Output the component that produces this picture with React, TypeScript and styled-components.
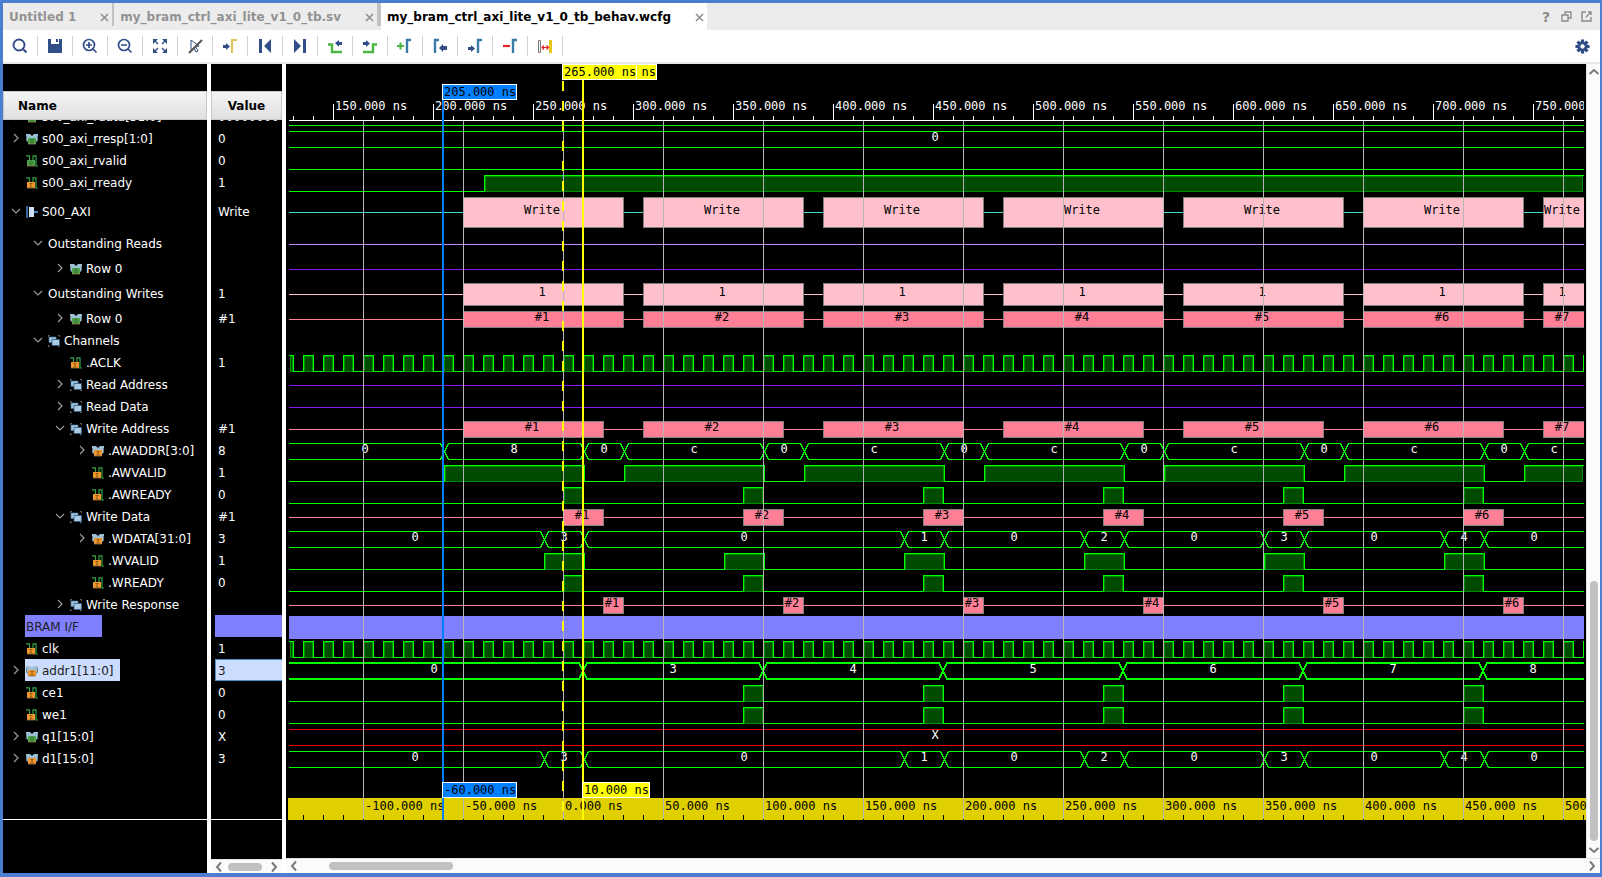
import React, { useEffect, useRef, useState } from "react";
import styled, { createGlobalStyle } from "styled-components";

const UI_FONT = '"DejaVu Sans", "Liberation Sans", sans-serif';
const MONO_FONT = '"DejaVu Sans Mono", "Liberation Mono", monospace';
const NAVY = "#314e88";
const GREEN = "#00ff00";
const VIOLET = "#8c14f0";
const ROSE = "#ff8096";
const PINK = "#ffc0cb";

const GlobalStyle = createGlobalStyle`
  * { box-sizing: border-box; }
  body { margin: 0; font-family: ${UI_FONT}; font-size: 12px; }
  button { border: 0; padding: 0; background: none; font: inherit; color: inherit; }
  svg { display: block; flex: none; }
`;

/* ---------- time axis: 2 px per nanosecond ---------- */

type Span = [number, number];

const EDGE = 3;
const at = (t: number) => 2 * t - 256;
const every90 = (from: number, len: number, count: number, delta = 0): Span[] =>
  Array.from({ length: count }, (_, i) => [
    at(from + 90 * i) + delta,
    at(from + 90 * i + len) + delta,
  ]);

type Wave =
  | { type: "none" }
  | { type: "bus"; cuts: number[]; values: string[]; color?: string; bold?: boolean }
  | { type: "logic"; highs: Span[] }
  | { type: "line"; y: number; color: string }
  | { type: "blocks"; y: number; line: string; fill: string; spans: Span[]; labels: string[]; bottom: number }
  | { type: "band" };

type IconKind = "busOut" | "busIn" | "out" | "in" | "iface" | "group";
interface Signal {
  name: string;
  level: number;
  value: string;
  height?: number;
  open?: boolean;
  icon?: IconKind;
  mark?: "band" | "selected";
  wave: Wave;
}

const tags = (n: number) => Array.from({ length: n }, (_, i) => `#${i + 1}`);
const clock: Wave = {
  type: "logic",
  highs: Array.from({ length: 110 }, (_, i) => [at(125 + 10 * i), at(130 + 10 * i)] as Span),
};
const ready: Wave = { type: "logic", highs: every90(265, 10, 6) };
const enable: Wave = { type: "logic", highs: every90(355, 10, 5) };
const data: Wave = {
  type: "bus",
  cuts: [255, 275, 435, 455, 525, 545, 615, 635, 705, 725].map((t) => at(t) + 1),
  values: ["0", "3", "0", "1", "0", "2", "0", "3", "0", "4", "0"],
};
const low: Wave = { type: "logic", highs: [] };
const idle: Wave = { type: "line", y: 12, color: VIOLET };
const bursts = (spans: Span[]): Wave => ({
  type: "blocks", y: 12, bottom: 21, line: ROSE, fill: ROSE, spans, labels: tags(spans.length),
});

const signals: Signal[] = [
  { name: "s00_axi_rdata[31:0]", level: 0, open: false, icon: "busOut", value: "00000000", wave: { type: "bus", cuts: [], values: [""] } },
  { name: "s00_axi_rresp[1:0]", level: 0, open: false, icon: "busOut", value: "0", wave: { type: "bus", cuts: [], values: ["0"] } },
  { name: "s00_axi_rvalid", level: 0, icon: "out", value: "0", wave: low },
  { name: "s00_axi_rready", level: 0, icon: "in", value: "1", wave: { type: "logic", highs: [[at(225) + 1, 9999]] } },
  {
    name: "S00_AXI", level: 0, open: true, icon: "iface", value: "Write", height: 36,
    wave: { type: "blocks", y: 19, bottom: 35, line: "#40e0d0", fill: PINK, spans: every90(215, 80, 7), labels: Array(7).fill("Write") },
  },
  { name: "Outstanding Reads", level: 1, open: true, value: "", height: 28, wave: { type: "line", y: 15, color: "#cc8cff" } },
  { name: "Row 0", level: 2, open: false, icon: "busOut", value: "", wave: idle },
  {
    name: "Outstanding Writes", level: 1, open: true, value: "1", height: 28,
    wave: { type: "blocks", y: 15, bottom: 27, line: PINK, fill: PINK, spans: every90(215, 80, 7), labels: Array(7).fill("1") },
  },
  { name: "Row 0", level: 2, open: false, icon: "busOut", value: "#1", wave: bursts(every90(215, 80, 7)) },
  { name: "Channels", level: 1, open: true, icon: "group", value: "", wave: { type: "none" } },
  { name: ".ACLK", level: 2, icon: "in", value: "1", wave: clock },
  { name: "Read Address", level: 2, open: false, icon: "group", value: "", wave: idle },
  { name: "Read Data", level: 2, open: false, icon: "group", value: "", wave: idle },
  { name: "Write Address", level: 2, open: true, icon: "group", value: "#1", wave: bursts(every90(215, 70, 7)) },
  {
    name: ".AWADDR[3:0]", level: 3, open: false, icon: "busIn", value: "8",
    wave: {
      type: "bus",
      cuts: [205, 275, 295, 365, 385, 455, 475, 545, 565, 635, 655, 725, 745].map((t) => at(t) + 1),
      values: ["0", "8", "0", "c", "0", "c", "0", "c", "0", "c", "0", "c", "0", "c"],
    },
  },
  {
    name: ".AWVALID", level: 3, icon: "in", value: "1",
    wave: { type: "logic", highs: [[at(205) + 1, at(275) + 1], ...every90(295, 70, 6, 1)] },
  },
  { name: ".AWREADY", level: 3, icon: "in", value: "0", wave: ready },
  { name: "Write Data", level: 2, open: true, icon: "group", value: "#1", wave: bursts(every90(265, 20, 6)) },
  { name: ".WDATA[31:0]", level: 3, open: false, icon: "busIn", value: "3", wave: data },
  { name: ".WVALID", level: 3, icon: "in", value: "1", wave: { type: "logic", highs: every90(255, 20, 6, 1) } },
  { name: ".WREADY", level: 3, icon: "in", value: "0", wave: ready },
  { name: "Write Response", level: 2, open: false, icon: "group", value: "", wave: bursts(every90(285, 10, 6)) },
  { name: "BRAM I/F", level: 0, mark: "band", value: "", wave: { type: "band" } },
  { name: "clk", level: 0, icon: "in", value: "1", wave: clock },
  {
    name: "addr1[11:0]", level: 0, open: false, icon: "busIn", mark: "selected", value: "3",
    wave: { type: "bus", bold: true, cuts: [275, 365, 455, 545, 635, 725].map(at), values: ["0", "3", "4", "5", "6", "7", "8"] },
  },
  { name: "ce1", level: 0, icon: "in", value: "0", wave: enable },
  { name: "we1", level: 0, icon: "in", value: "0", wave: enable },
  { name: "q1[15:0]", level: 0, open: false, icon: "busOut", value: "X", wave: { type: "bus", cuts: [], values: ["X"], color: "#f00000" } },
  { name: "d1[15:0]", level: 0, open: false, icon: "busIn", value: "3", wave: data },
];

/* ---------- frame ---------- */

const Frame = styled.main`
  display: flex;
  flex-direction: column;
  height: 100vh;
  min-height: 600px;
  border: 3px solid #4a7ecf;
  border-width: 3px 2px 4px 3px;
  background: #fff;
  overflow: hidden;
`;

const TabBar = styled.nav`
  display: flex;
  align-items: stretch;
  flex: none;
  height: 27px;
  background: #ececec;
`;

const Tab = styled.div<{ $active?: boolean }>`
  display: flex;
  align-items: center;
  padding-left: 6px;
  background: ${(p) => (p.$active ? "#fff" : "transparent")};
  & > button:first-child {
    font-weight: bold;
    color: ${(p) => (p.$active ? "#000" : "#929292")};
    white-space: nowrap;
    line-height: 26px;
  }
`;

const TabRule = styled.span<{ $w: number }>`
  width: ${(p) => p.$w}px;
  height: 23px;
  background: #c2c2c2;
`;

const CloseButton = styled.button`
  display: flex;
  align-items: center;
  margin: 2px 3px 0 24px;
  color: #8f8f8f;
`;

const TabTools = styled.div`
  display: flex;
  align-items: center;
  gap: 8px;
  margin-left: auto;
  padding-right: 8px;
  color: #8a8a8a;
  font-size: 14px;
  font-weight: bold;
  & > button { display: flex; justify-content: center; width: 12px; }
`;

const Toolbar = styled.div`
  display: flex;
  align-items: center;
  flex: none;
  height: 34px;
  border-bottom: 2px solid #e7e7e7;
`;

const ToolButton = styled.button`
  display: flex;
  align-items: center;
  justify-content: center;
  width: 35px;
  height: 20px;
  border-right: 1px solid #d2d2d2;
`;

const SettingsButton = styled.button`
  margin-left: auto;
  margin-right: 10px;
`;

const Body = styled.div`
  display: flex;
  flex: 1;
  min-height: 0;
  gap: 4px;
`;

const Column = styled.section<{ $w: number }>`
  display: flex;
  flex-direction: column;
  flex: none;
  width: ${(p) => p.$w}px;
  background: #000;
  color: #fff;
`;

const ColumnHead = styled.h2<{ $center?: boolean }>`
  flex: none;
  margin: 27px 0 0;
  height: 29px;
  line-height: 29px;
  padding-left: ${(p) => (p.$center ? 0 : 14)}px;
  text-align: ${(p) => (p.$center ? "center" : "left")};
  border: 1px solid #c8c8c8;
  background: linear-gradient(#f4f4f4, #e0e0e3);
  color: #000;
  font-size: 12px;
  font-weight: bold;
`;

const RowList = styled.ul`
  flex: 1;
  min-height: 0;
  margin: 0;
  padding: 0;
  list-style: none;
  overflow: hidden;
  border-bottom: 1px solid #fff;
  & > li:first-child { margin-top: -15px; }
`;

const ColumnFoot = styled.div<{ $h: number }>`
  flex: none;
  height: ${(p) => p.$h}px;
`;

const NameRow = styled.li<{ $level: number; $h: number }>`
  display: flex;
  align-items: center;
  height: ${(p) => p.$h}px;
  padding-left: ${(p) => 2 + 22 * p.$level}px;
`;

const Expander = styled.button`
  width: 20px;
  flex: none;
`;

const NameLabel = styled.span<{ $mark?: string }>`
  display: flex;
  align-items: center;
  gap: 4px;
  height: 22px;
  padding: 2px 7px 0 1px;
  min-width: ${(p) => (p.$mark === "band" ? "77px" : "0")};
  background: ${(p) => (p.$mark === "band" ? "#8080ff" : p.$mark ? "#ccdcff" : "none")};
  color: ${(p) => (p.$mark ? "#202020" : "#fff")};
  white-space: nowrap;
`;

const ValueRow = styled.li<{ $h: number; $mark?: string }>`
  display: flex;
  align-items: center;
  height: ${(p) => p.$h}px;
  margin-left: 4px;
  padding-top: 2px;
  padding-left: ${(p) => (p.$mark === "selected" ? 2 : 3)}px;
  border: ${(p) => (p.$mark === "selected" ? "1px solid #4a90c8" : "0")};
  border-right: 0;
  background: ${(p) => (p.$mark === "band" ? "#8080ff" : p.$mark ? "#ccdcff" : "none")};
  color: ${(p) => (p.$mark ? "#202020" : "#fff")};
`;

/* ---------- wave panel ---------- */

const WaveColumn = styled.section`
  display: flex;
  flex-direction: column;
  flex: 1;
  min-width: 0;
`;

const WaveMain = styled.div`
  display: flex;
  flex: 1;
  min-height: 0;
`;

const Canvas = styled.div`
  position: relative;
  display: flex;
  flex-direction: column;
  flex: 1;
  min-width: 0;
  background: #000;
  overflow: hidden;
`;

const TopRuler = styled.div`
  flex: none;
  height: 57px;
  margin: 0 2px 0 3px;
  overflow: hidden;
`;

const WaveRows = styled.div`
  flex: 1;
  min-height: 0;
  margin: 0 2px 0 3px;
  overflow: hidden;
  & > svg:first-child { margin-top: -16px; }
`;

const BottomRuler = styled.div`
  flex: none;
  height: 22px;
  margin-left: 2px;
  margin-bottom: 38px;
  background: #e0d000;
  overflow: hidden;
`;

const Plot = styled.svg`
  width: 100%;
  overflow: visible;
  shape-rendering: crispEdges;
  font-family: ${MONO_FONT};
  font-size: 12px;
`;

const Overlay = styled.div`
  position: absolute;
  inset: 0 0 38px 0;
  pointer-events: none;
`;

const Cursor = styled.div<{ $x: number; $top: number; $color: string; $dashed?: boolean }>`
  position: absolute;
  left: ${(p) => p.$x}px;
  top: ${(p) => p.$top}px;
  bottom: ${(p) => (p.$dashed ? 9 : 0)}px;
  width: 2px;
  background: ${(p) =>
    p.$dashed ? `repeating-linear-gradient(${p.$color} 0 10px, transparent 10px 20px)` : p.$color};
`;

const CursorTag = styled.span<{ $x: number; $top?: number; $color: string }>`
  position: absolute;
  left: ${(p) => p.$x}px;
  ${(p) => (p.$top === undefined ? "bottom: 22px;" : `top: ${p.$top}px;`)}
  height: 16px;
  padding-left: 1px;
  border: 1px solid #fff;
  background: ${(p) => p.$color};
  color: #000;
  font: 12px/14px ${MONO_FONT};
  white-space: pre;
`;

/* main cursor's tag, tucked behind the floating ruler's tag */
const CoveredTag = styled(CursorTag)`
  width: 75px;
  text-align: right;
`;

/* ---------- scroll bars ---------- */

const HBar = styled.div<{ $h: number }>`
  display: flex;
  align-items: center;
  flex: none;
  height: ${(p) => p.$h}px;
  padding: 0 2px;
  border-top: 1px solid #e4e4e4;
  background: #fbfbfb;
`;

const VBar = styled.div`
  display: flex;
  flex-direction: column;
  align-items: center;
  flex: none;
  width: 14px;
  padding: 2px 0;
  border-left: 1px solid #e4e4e4;
  background: #fbfbfb;
`;

const ArrowButton = styled.button`
  display: flex;
  align-items: center;
  justify-content: center;
  width: 12px;
  height: 12px;
`;

const Track = styled.div<{ $vertical?: boolean }>`
  display: flex;
  flex-direction: ${(p) => (p.$vertical ? "column" : "row")};
  align-items: center;
  flex: 1;
`;

const Thumb = styled.div<{ $before: string; $length: string; $vertical?: boolean }>`
  border-radius: 4px;
  background: #c1c1c1;
  ${(p) =>
    p.$vertical
      ? `width: 8px; height: ${p.$length}; margin-top: auto; margin-bottom: ${p.$before};`
      : `height: 8px; width: ${p.$length}; margin-left: ${p.$before};`}
`;

/* ---------- small drawings ---------- */

const chevronPaths = {
  l: "M8 1.500L4 6L8 10.500",
  r: "M4 1.500L8 6L4 10.500",
  u: "M1.500 8L6 4L10.500 8",
  d: "M1.500 4L6 8L10.500 4",
};

const Chevron = ({ dir }: { dir: keyof typeof chevronPaths }) => (
  <svg width="12" height="12" viewBox="0 0 12 12">
    <path d={chevronPaths[dir]} fill="none" stroke="#7a7a7a" strokeWidth="2" />
  </svg>
);

const Toggle = ({ open }: { open: boolean }) => (
  <svg width="20" height="12" viewBox="0 0 20 12">
    <path d={open ? "M7 4L11 8L15 4" : "M9 2L13 6L9 10"} fill="none" stroke="#9a9a9a" strokeWidth="1.2" />
  </svg>
);

const Port = ({ out, x }: { out: boolean; x: number }) => (
  <g transform={`translate(${x} 0)`}>
    <path d="M0 5H8V11H0Z" fill={out ? "#4ea24a" : "#f0962c"} />
    <path d="M0 11H8" stroke="#9a7748" strokeWidth=".8" />
    {out ? (
      <ellipse cx="4" cy="8" rx="1.300" ry="2" fill="none" stroke="#2c6a2c" strokeWidth=".9" />
    ) : (
      <path d="M2.500 6.500H5.500M4 6.500V10M2.500 10H5.500" fill="none" stroke="#8a5510" strokeWidth=".9" />
    )}
  </g>
);

const SignalIcon = ({ kind }: { kind: IconKind }) => (
  <svg width="12" height="12" viewBox="0 0 12 12">
    {(kind === "busOut" || kind === "busIn") && (
      <>
        <path d="M0 1H4L6 3L8 1H12V7L10 9H2L0 7Z" fill="#9cc0d6" />
        <path d="M.5 3V7L2 9M11.500 3V7L10 9" stroke="#6f7f88" fill="none" />
        <Port out={kind === "busOut"} x={2} />
      </>
    )}
    {(kind === "out" || kind === "in") && (
      <>
        <path d="M0 .8H3.500V6M7 6V.8H10V11H12" fill="none" stroke="#35a24a" strokeWidth="1.200" />
        <Port out={kind === "out"} x={1} />
      </>
    )}
    {kind === "iface" && (
      <>
        <path d="M0 0H2V12H0Z" fill="#33699c" />
        <path d="M3 1H8V11H3Z" fill="#cfe2f2" />
        <path d="M8 5H12V7H8Z" fill="#3f7fb5" />
      </>
    )}
    {kind === "group" && (
      <>
        <path d="M0 .5H2M10 .5H12M0 11.500H2M10 11.500H12M.5 0V2M11.500 0V2M.5 10V12" stroke="#5c5c5c" fill="none" />
        <path d="M1 2H8V7.500H1Z" fill="#9cc0d8" stroke="#4a7fa8" strokeWidth=".6" />
        <path d="M4 4.500H11.500V10.500H4Z" fill="#a9cce2" stroke="#33597c" strokeWidth=".8" />
      </>
    )}
  </svg>
);

const ARROW_L = "M0 3L4 0V2H7V5H4V7Z";
const ARROW_R = "M7 3.500L3 0V2H0V5H3V7Z";
const LENS = "M10.500 10.500L14.500 14.500";

const tools: { label: string; art: React.ReactNode }[] = [
  { label: "Search", art: <g fill="none" stroke={NAVY} strokeWidth="1.900"><circle cx="7" cy="7" r="5.500" /><path d={LENS} /></g> },
  { label: "Save", art: <path d="M1 1H4V6H12V1H15V15H1ZM9 1H11V4H9Z" fill={NAVY} /> },
  { label: "Zoom in", art: <g fill="none" stroke={NAVY} strokeWidth="1.700"><circle cx="7" cy="7" r="5.500" /><path d={`${LENS}M4 7H10M7 4V10`} /></g> },
  { label: "Zoom out", art: <g fill="none" stroke={NAVY} strokeWidth="1.700"><circle cx="7" cy="7" r="5.500" /><path d={`${LENS}M4 7H10`} /></g> },
  { label: "Zoom fit", art: <g fill={NAVY} stroke={NAVY} strokeWidth="1.400"><path d="M2.500 2.500L6 6M13.500 2.500L10 6M2.500 13.500L6 10M13.500 13.500L10 10" /><path stroke="none" d="M1 1H6L1 6ZM15 1H10L15 6ZM1 15H6L1 10ZM15 15H10L15 10Z" /></g> },
  { label: "Zoom to cursor", art: <g><path d="M4 2L12 8L8.500 8.500L11 13L9 14L7 10L4 12Z" fill="#fff" stroke={NAVY} /><path d="M2 15L15 2" stroke="#5a5a5a" strokeWidth="2.200" /></g> },
  { label: "Go to cursor", art: <g><path transform="translate(1 5)" d={ARROW_R} fill={NAVY} /><path d="M10 15V2H15" fill="none" stroke="#e2c55c" strokeWidth="2.200" /></g> },
  { label: "Go to time 0", art: <path d="M2 1H5V15H2ZM14 1V15L7 8Z" fill={NAVY} /> },
  { label: "Go to last time", art: <path d="M11 1H14V15H11ZM2 1V15L9 8Z" fill={NAVY} /> },
  { label: "Previous transition", art: <g><path d="M1 6.500H5V14H15" fill="none" stroke="#4bb543" strokeWidth="2.400" /><path transform="translate(8 2)" d={ARROW_L} fill={NAVY} /></g> },
  { label: "Next transition", art: <g><path d="M1 14H11V6.500H15" fill="none" stroke="#4bb543" strokeWidth="2.400" /><path transform="translate(1 2)" d={ARROW_R} fill={NAVY} /></g> },
  { label: "Add marker", art: <g fill="none"><path d="M0 8H7M3.500 4.500V11.500" stroke="#4bb543" strokeWidth="2" /><path d="M10 15V2H14" stroke="#3a7ba8" strokeWidth="2.400" /></g> },
  { label: "Previous marker", art: <g><path d="M3 15V2H7" fill="none" stroke="#3a7ba8" strokeWidth="2.400" /><path transform="translate(7 6)" d="M0 4L4 0V2H8V6H4V8Z" fill={NAVY} /></g> },
  { label: "Next marker", art: <g><path d="M11 15V2H15" fill="none" stroke="#3a7ba8" strokeWidth="2.400" /><path transform="translate(1 7)" d={ARROW_R} fill={NAVY} /></g> },
  { label: "Remove marker", art: <g fill="none"><path d="M1 8H8" stroke="#e8202a" strokeWidth="2.200" /><path d="M11 15V2H15" stroke="#3a7ba8" strokeWidth="2.400" /></g> },
  { label: "Swap cursors", art: <g fill="none"><path d="M1.500 2.500H3.500V14.500H1.500Z" stroke="#7a7a7a" /><path d="M13.500 2V15" stroke="#e6c619" strokeWidth="3" /><path d="M5 9.500H11.500M7 7.500L5 9.500L7 11.500M9.500 7.500L11.500 9.500L9.500 11.500" stroke="#e8202a" strokeWidth="1.200" /></g> },
];

const Gear = () => (
  <svg width="15" height="15" viewBox="-8 -8 16 16">
    {[0, 45, 90, 135].map((a) => (
      <rect key={a} x="-1.700" y="-7.500" width="3.400" height="15" fill={NAVY} transform={`rotate(${a})`} />
    ))}
    <circle r="5.400" fill={NAVY} />
    <circle r="2.300" fill="#fff" />
  </svg>
);

const CloseMark = () => (
  <svg width="9" height="9" viewBox="0 0 9 9">
    <path d="M1 1L8 8M8 1L1 8" stroke="currentColor" strokeWidth="1.600" />
  </svg>
);

/* ---------- traces ---------- */

const BusTrace = ({ wave, width }: { wave: Extract<Wave, { type: "bus" }>; width: number }) => {
  const color = wave.color ?? GREEN;
  const cuts = wave.cuts.filter((c) => c < width);
  const edges = [-EDGE, ...cuts, width];
  const o = wave.bold ? 0 : 0.5;
  const start = wave.bold ? -1 : 0;
  const [top, bottom] = [4 + o, 20 + o];
  let first = `M${start} ${top}`;
  let second = `M${start} ${bottom}`;
  let flipped = false;
  cuts.forEach((c) => {
    first += `H${c - 4 + o}L${c + 4 + o} ${flipped ? top : bottom}`;
    second += `H${c - 4 + o}L${c + 4 + o} ${flipped ? bottom : top}`;
    flipped = !flipped;
  });
  return (
    <>
      <path d={`${first}H${width}${second}H${width}`} fill="none" stroke={color} strokeWidth={wave.bold ? 2 : 1} />
      {edges.slice(1).map((end, i) => (
        <text key={i} x={Math.floor((edges[i] + end) / 2)} y="14" textAnchor="middle" fill="#fff">
          {wave.values[i]}
        </text>
      ))}
    </>
  );
};

const LogicTrace = ({ highs, width }: { highs: Span[]; width: number }) => {
  const shown = highs.filter(([a, b]) => a < width && b > 0);
  let d = "M0 20.5";
  shown.forEach(([a, b]) => {
    d += a < 0 ? "M0 4.500" : `H${a + 0.5}V4.500`;
    d += b > width ? `H${width}` : `H${b + 0.5}V20.500`;
  });
  if (!shown.length || shown[shown.length - 1][1] <= width) d += `H${width}`;
  return (
    <>
      {shown.map(([a, b], i) => {
        const left = Math.max(a, 0) + 1;
        const right = Math.min(b, width - 1);
        return (
          <rect key={i} x={left + 0.5} y="5.500" width={Math.max(right - left - 1, 1)} height="15" fill="#004b00" stroke="#008c00" />
        );
      })}
      <path d={d} fill="none" stroke={GREEN} />
    </>
  );
};

const BlockTrace = ({ wave, width }: { wave: Extract<Wave, { type: "blocks" }>; width: number }) => (
  <>
    <path d={`M0 ${wave.y + 0.5}H${width}`} stroke={wave.line} />
    {wave.spans
      .filter(([a]) => a < width)
      .map(([a, b], i) => (
        <React.Fragment key={i}>
          <rect x={a + 0.5} y="4.500" width={b - a} height={wave.bottom - 5} fill={wave.fill} stroke="#808080" />
          <text x={Math.floor((a + Math.min(b, width)) / 2) - 1} y={wave.y + 2} textAnchor="middle" fill="#000">
            {wave.labels[i]}
          </text>
        </React.Fragment>
      ))}
  </>
);

const Trace = ({ wave, width }: { wave: Wave; width: number }) => {
  switch (wave.type) {
    case "bus":
      return <BusTrace wave={wave} width={width} />;
    case "logic":
      return <LogicTrace highs={wave.highs} width={width} />;
    case "line":
      return <path d={`M0 ${wave.y + 0.5}H${width}`} stroke={wave.color} />;
    case "blocks":
      return <BlockTrace wave={wave} width={width} />;
    case "band":
      return <rect y="1" width={width} height="23" fill="#8080ff" />;
    default:
      return null;
  }
};

const range = (from: number, to: number, step: number) => {
  const out: number[] = [];
  for (let v = from; v < to; v += step) out.push(v);
  return out;
};

const Waves = () => {
  const rows = useRef<HTMLDivElement>(null);
  const [width, setWidth] = useState(1295);
  useEffect(() => {
    if (!rows.current) return;
    const watch = new ResizeObserver(([entry]) => setWidth(Math.round(entry.contentRect.width)));
    watch.observe(rows.current);
    return () => watch.disconnect();
  }, []);

  return (
    <Canvas>
      <TopRuler>
        <Plot height="57">
          <path d={`M0 56.500H${width}`} stroke="#fff" />
          {range(4, width, 20).map((x) => (
            <path key={x} d={`M${x + 0.5} ${(x - 44) % 100 ? 52 : 40}V57`} stroke="#fff" />
          ))}
          {range(44, width, 100).map((x) => (
            <text key={x} x={x + 2} y="46" fill="#fff">{`${(x + 256) / 2}.000 ns`}</text>
          ))}
        </Plot>
      </TopRuler>
      <WaveRows ref={rows}>
        {signals.map((s, i) => (
          <Plot key={i} height={s.height ?? 22}>
            <Trace wave={s.wave} width={width} />
          </Plot>
        ))}
      </WaveRows>
      <BottomRuler>
        <Plot height="22">
          {range(15, width + 3, 20).map((x) => (
            <path key={x} d={`M${x + 0.5} ${(x - 75) % 100 ? 17 : 21}V22`} stroke="#000" />
          ))}
          {range(75, width + 3, 100).map((x) => (
            <text key={x} x={x + 2} y="12" fill="#000">{`${(x - 275) / 2}.000 ns`}</text>
          ))}
        </Plot>
      </BottomRuler>
      <Overlay>
        <Plot height="100%">
          {range(77, width, 100).map((x) => (
            <line key={x} x1={x + 0.5} x2={x + 0.5} y1="57" y2="99.9%" stroke="#b4b4b4" />
          ))}
        </Plot>
        <Cursor $x={156} $top={36} $color="#0080ff" />
        <Cursor $x={296} $top={16} $color="#ffff00" />
        <Cursor $x={276} $top={17} $color="#ffff00" $dashed />
        <CursorTag $x={156} $top={20} $color="#0080ff">205.000 ns</CursorTag>
        <CoveredTag $x={296} $top={0} $color="#ffff00">ns</CoveredTag>
        <CursorTag $x={276} $top={0} $color="#ffff00">265.000 ns</CursorTag>
        <CursorTag $x={156} $color="#0080ff">-60.000 ns</CursorTag>
        <CursorTag $x={296} $color="#ffff00">10.000 ns</CursorTag>
      </Overlay>
    </Canvas>
  );
};

const tabs = ["Untitled 1", "my_bram_ctrl_axi_lite_v1_0_tb.sv", "my_bram_ctrl_axi_lite_v1_0_tb_behav.wcfg"];

export default function App() {
  return (
    <>
      <GlobalStyle />
      <Frame>
        <TabBar>
          {tabs.map((name, i) => (
            <React.Fragment key={name}>
              <Tab $active={i === 2}>
                <button>{name}</button>
                <CloseButton aria-label={`Close ${name}`}>
                  <CloseMark />
                </CloseButton>
              </Tab>
              {i < 2 && <TabRule $w={i ? 4 : 2} />}
            </React.Fragment>
          ))}
          <TabTools>
            <button aria-label="Help">?</button>
            <button aria-label="Restore">
              <svg width="11" height="11" viewBox="0 0 11 11" fill="none" stroke="currentColor" strokeWidth="1.300">
                <path d="M4 4V1H10V7H7M1 4H7V10H1Z" />
              </svg>
            </button>
            <button aria-label="Float">
              <svg width="11" height="11" viewBox="0 0 11 11" fill="none" stroke="currentColor" strokeWidth="1.400">
                <path d="M5 1H1V10H10V6M5 6L9.500 1.500M7 1H10V4" />
              </svg>
            </button>
          </TabTools>
        </TabBar>
        <Toolbar role="toolbar">
          {tools.map((t) => (
            <ToolButton key={t.label} aria-label={t.label}>
              <svg width="16" height="16" viewBox="0 0 16 16">{t.art}</svg>
            </ToolButton>
          ))}
          <SettingsButton aria-label="Settings">
            <Gear />
          </SettingsButton>
        </Toolbar>
        <Body>
          <Column $w={204}>
            <ColumnHead>Name</ColumnHead>
            <RowList>
              {signals.map((s, i) => (
                <NameRow key={i} $level={s.level} $h={s.height ?? 22}>
                  <Expander aria-label={s.open === undefined ? undefined : "Toggle"} disabled={s.open === undefined}>
                    {s.open !== undefined && <Toggle open={s.open} />}
                  </Expander>
                  <NameLabel $mark={s.mark}>
                    {s.icon && <SignalIcon kind={s.icon} />}
                    {s.name}
                  </NameLabel>
                </NameRow>
              ))}
            </RowList>
            <ColumnFoot $h={53} />
          </Column>
          <Column $w={71}>
            <ColumnHead $center>Value</ColumnHead>
            <RowList>
              {signals.map((s, i) => (
                <ValueRow key={i} $h={s.height ?? 22} $mark={s.mark}>
                  {s.value}
                </ValueRow>
              ))}
            </RowList>
            <ColumnFoot $h={39} />
            <HBar $h={14}>
              <ArrowButton aria-label="Scroll left"><Chevron dir="l" /></ArrowButton>
              <Track><Thumb $before="3px" $length="34px" /></Track>
              <ArrowButton aria-label="Scroll right"><Chevron dir="r" /></ArrowButton>
            </HBar>
          </Column>
          <WaveColumn>
            <WaveMain>
              <Waves />
              <VBar>
                <ArrowButton aria-label="Scroll up"><Chevron dir="u" /></ArrowButton>
                <Track $vertical><Thumb $vertical $before="3px" $length="260px" /></Track>
                <ArrowButton aria-label="Scroll down"><Chevron dir="d" /></ArrowButton>
              </VBar>
            </WaveMain>
            <HBar $h={15}>
              <ArrowButton aria-label="Scroll left"><Chevron dir="l" /></ArrowButton>
              <Track><Thumb $before="29px" $length="124px" /></Track>
              <ArrowButton aria-label="Scroll right"><Chevron dir="r" /></ArrowButton>
            </HBar>
          </WaveColumn>
        </Body>
      </Frame>
    </>
  );
}
